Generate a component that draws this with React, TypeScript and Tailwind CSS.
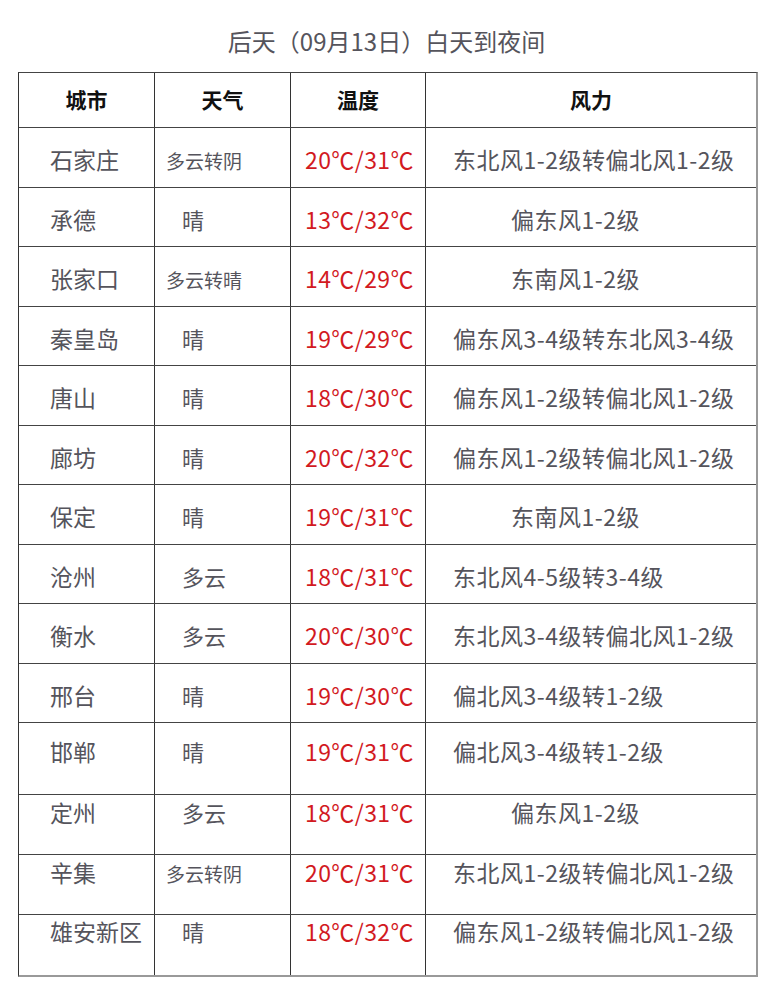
const ROWS = [
  { city: "石家庄", wx: "多云转阴", temp: "20℃/31℃", wind: "东北风1-2级转偏北风1-2级" },
  { city: "承德", wx: "晴", temp: "13℃/32℃", wind: "偏东风1-2级" },
  { city: "张家口", wx: "多云转晴", temp: "14℃/29℃", wind: "东南风1-2级" },
  { city: "秦皇岛", wx: "晴", temp: "19℃/29℃", wind: "偏东风3-4级转东北风3-4级" },
  { city: "唐山", wx: "晴", temp: "18℃/30℃", wind: "偏东风1-2级转偏北风1-2级" },
  { city: "廊坊", wx: "晴", temp: "20℃/32℃", wind: "偏东风1-2级转偏北风1-2级" },
  { city: "保定", wx: "晴", temp: "19℃/31℃", wind: "东南风1-2级" },
  { city: "沧州", wx: "多云", temp: "18℃/31℃", wind: "东北风4-5级转3-4级" },
  { city: "衡水", wx: "多云", temp: "20℃/30℃", wind: "东北风3-4级转偏北风1-2级" },
  { city: "邢台", wx: "晴", temp: "19℃/30℃", wind: "偏北风3-4级转1-2级" },
  { city: "邯郸", wx: "晴", temp: "19℃/31℃", wind: "偏北风3-4级转1-2级", h: "h-[72px]", pt: "pt-[13px]" },
  { city: "定州", wx: "多云", temp: "18℃/31℃", wind: "偏东风1-2级", h: "h-[59.5px]", pt: "pt-[2px]" },
  { city: "辛集", wx: "多云转阴", temp: "20℃/31℃", wind: "东北风1-2级转偏北风1-2级", h: "h-[60px]", pt: "pt-[2px]" },
  { city: "雄安新区", wx: "晴", temp: "18℃/32℃", wind: "偏东风1-2级转偏北风1-2级", h: "h-[60px]", pt: "pt-[1px]" },
];

export default function App() {
  return (
    <main className="w-[773px] bg-white pb-[27px] font-['Noto_Sans_CJK_SC',sans-serif]">
      <h1 className="h-[72px] pt-[25px] text-center text-[24px] leading-[32px] text-[#55545c]">
        后天（09月13日）白天到夜间
      </h1>
      <div className="ml-[18px] w-[740px] border-l border-t border-r-2 border-b-2 border-l-[#333] border-t-[#444] border-r-[#999] border-b-[#999]">
        <div className="grid h-[55px] grid-cols-[136px_136px_135px_1fr] border-b border-[#444] text-[21px] font-bold text-[#111]">
          <div className="flex items-center justify-center border-r border-[#333]">城市</div>
          <div className="flex items-center justify-center border-r border-[#333]">天气</div>
          <div className="flex items-center justify-center border-r border-[#333]">温度</div>
          <div className="flex items-center justify-center">风力</div>
        </div>
        {ROWS.map((r, i) => {
          const long = r.wind.length > 8;
          const small = r.wx.length > 2;
          const pt = r.pt ?? "pt-[16px]";
          return (
            <div
              key={r.city}
              className={`grid grid-cols-[136px_136px_135px_1fr] ${
                i < ROWS.length - 1 ? "border-b border-[#444]" : ""
              } ${r.h ?? "h-[59.5px]"} leading-[30px] text-[#55545c]`}
            >
              <div className={`border-r border-[#333] pl-[31px] text-[23px] ${pt}`}>{r.city}</div>
              <div
                className={`border-r border-[#333] ${pt} ${
                  small ? "pl-[11px] text-[19px]" : "pl-[27px] text-[22px]"
                }`}
              >
                <span className={small ? "relative top-[2px]" : ""}>{r.wx}</span>
              </div>
              <div className={`border-r border-[#333] pl-[14px] text-[23px] tracking-[0.4px] text-[#d21a1f] ${pt}`}>
                {r.temp}
              </div>
              <div
                className={`${long ? "pl-[27px]" : "pl-[85px]"} whitespace-nowrap text-[23px] tracking-[0.5px] ${pt}`}
              >
                {r.wind}
              </div>
            </div>
          );
        })}
      </div>
    </main>
  );
}
